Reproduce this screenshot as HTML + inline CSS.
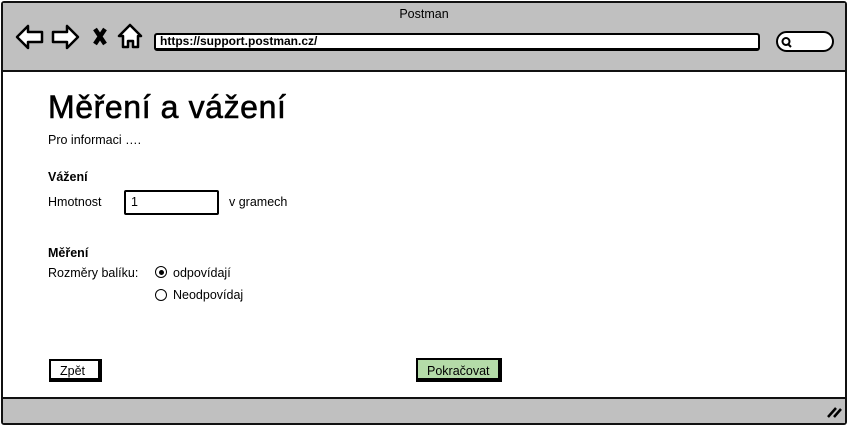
<!DOCTYPE html>
<html><head><meta charset="utf-8"><style>
*{margin:0;padding:0;box-sizing:border-box}
body{width:848px;height:426px;background:#fff;font-family:"Liberation Sans",sans-serif;color:#000;position:relative;overflow:hidden}
.a{position:absolute;white-space:nowrap}
.t{font-size:12.5px}
</style></head><body>
<div class="a" style="left:1px;top:1px;width:846px;height:424px;border:2px solid #111;border-radius:3px"></div>
<div class="a" style="left:3px;top:3px;width:842px;height:69px;background:#c0c0c0;border-bottom:2px solid #111"></div>
<div class="a" style="left:3px;top:397px;width:842px;height:26px;background:#c0c0c0;border-top:2px solid #111"></div>
<div class="a t" style="left:0;width:848px;text-align:center;top:7px">Postman</div>
<svg class="a" style="left:14px;top:22px" width="130" height="30" viewBox="0 0 130 30" fill="#fff" stroke="#000" stroke-width="2.5" stroke-linejoin="round">
<path d="M3 15 L14 4 L14 10 L28 10 L28 20 L14 20 L14 26 Z"/>
<path d="M64 15 L53 4 L53 10 L39 10 L39 20 L53 20 L53 26 Z"/>
<path d="M81 7 L91 22 M91 7 L81 22" stroke-width="4.5" fill="none"/>
<path d="M116 3 L105 14 L109 14 L109 25 L114 25 L114 19 L119 19 L119 25 L124 25 L124 14 L127 14 Z"/>
</svg>
<div class="a" style="left:154px;top:33px;width:606px;height:18px;background:#fff;border:2px solid #000;border-bottom-width:3px;border-radius:3px"></div>
<div class="a t" style="left:160px;top:34px;font-weight:bold;font-size:12px">https://support.postman.cz/</div>
<div class="a" style="left:776px;top:31px;width:58px;height:21px;background:#fff;border:2px solid #000;border-radius:11px"></div>
<svg class="a" style="left:780px;top:36px" width="14" height="12"><circle cx="6" cy="5.5" r="3.5" fill="none" stroke="#000" stroke-width="2"/><path d="M8 8 L11 11" stroke="#000" stroke-width="2"/></svg>
<div class="a" style="left:48px;top:89px;font-size:32px;letter-spacing:0.6px;-webkit-text-stroke:0.6px #000">Měření a vážení</div>
<div class="a t" style="left:48px;top:133px">Pro informaci ….</div>
<div class="a t" style="left:48px;top:170px;font-weight:bold">Vážení</div>
<div class="a t" style="left:48px;top:195px">Hmotnost</div>
<div class="a" style="left:124px;top:190px;width:95px;height:25px;border:2px solid #000;border-radius:2px"></div>
<div class="a t" style="left:131px;top:195px">1</div>
<div class="a t" style="left:229px;top:195px">v gramech</div>
<div class="a t" style="left:48px;top:246px;font-weight:bold">Měření</div>
<div class="a t" style="left:48px;top:266px">Rozměry balíku:</div>
<div class="a" style="left:155px;top:266px;width:12px;height:12px;border:1.5px solid #000;border-radius:50%"></div>
<div class="a" style="left:159px;top:270px;width:5px;height:5px;background:#000;border-radius:50%"></div>
<div class="a t" style="left:173px;top:266px">odpovídají</div>
<div class="a" style="left:155px;top:289px;width:12px;height:12px;border:1.5px solid #000;border-radius:50%"></div>
<div class="a t" style="left:173px;top:288px">Neodpovídaj</div>
<div class="a t" style="left:49px;top:359px;width:53px;height:23px;border:2px solid #000;border-right-width:4px;border-bottom-width:4px;padding:3px 0 0 9px">Zpět</div>
<div class="a t" style="left:416px;top:358px;width:86px;height:24px;background:#b4dba8;border:2px solid #000;border-right-width:4px;border-bottom-width:4px;padding:4px 0 0 9px">Pokračovat</div>
<svg class="a" style="left:826px;top:405px" width="16" height="14"><path d="M2 12 L10 3 M8 12 L15 4" stroke="#000" stroke-width="2.5"/></svg>
</body></html>
